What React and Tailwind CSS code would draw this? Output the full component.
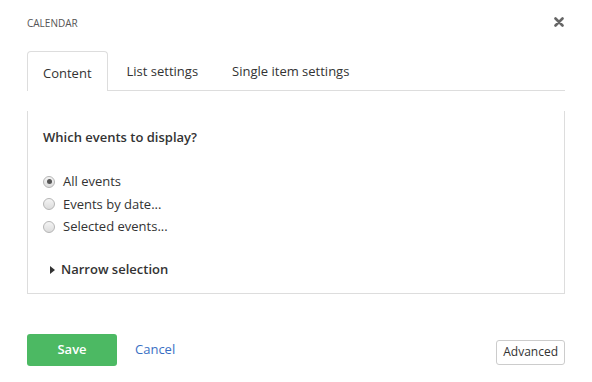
import { useState } from "react";

const Radio = ({ checked, label, onClick }) => (
  <label onClick={onClick} className="flex items-center gap-[8px] h-[22.5px] cursor-pointer">
    <span className="w-[12px] h-[12px] rounded-full border border-[#b5b5b5] bg-gradient-to-b from-[#f4f4f4] to-[#dcdcdc] flex items-center justify-center">
      {checked && <span className="w-[5px] h-[5px] rounded-full bg-[#555]" />}
    </span>
    <span className="text-[13px] text-[#333]">{label}</span>
  </label>
);

export default function App() {
  const [choice, setChoice] = useState(0);
  const tabs = ["Content", "List settings", "Single item settings"];

  return (
    <div className="w-[592px] h-[382px] bg-white font-['Open_Sans',sans-serif] text-[#333] px-[27px]">
      {/* Header */}
      <div className="flex items-center justify-between h-[46px] pt-[1px]">
        <span className="text-[10px] text-[#555] tracking-[0px]">CALENDAR</span>
        <svg width="10" height="10" viewBox="0 0 10 10" className="mr-[1px] -mt-[4px]">
          <path d="M1.5 1.5 L8.5 8.5 M8.5 1.5 L1.5 8.5" stroke="#666" strokeWidth="2.6" strokeLinecap="round" />
        </svg>
      </div>

      {/* Tabs */}
      <div className="flex items-end h-[46px] border-b border-[#ddd] mt-[-1px]">
        {tabs.map((t, i) => (
          <div
            key={t}
            className={
              i === 0
                ? "h-[40px] px-[15px] pt-[4px] flex items-center border border-b-0 border-[#ddd] rounded-t-[4px] bg-white mb-[-1px] text-[13px]"
                : "h-[40px] pl-[19px] pr-[15px] pt-[4px] flex items-center text-[13px]"
            }
          >
            {t}
          </div>
        ))}
      </div>

      {/* Panel */}
      <div className="mt-[20px] h-[183px] border border-t-0 border-[#ddd] px-[15px] pt-[17px]">
        <div className="text-[13px] font-semibold text-[#333]">Which events to display?</div>
        <div className="mt-[23px]">
          {["All events", "Events by date...", "Selected events..."].map((l, i) => (
            <Radio key={l} label={l} checked={choice === i} onClick={() => setChoice(i)} />
          ))}
        </div>
        <div className="flex items-center gap-[6px] mt-[22px] ml-[7px]">
          <svg width="5" height="8" viewBox="0 0 5 8">
            <path d="M0 0 L5 4 L0 8 Z" fill="#333" />
          </svg>
          <span className="text-[13px] font-semibold">Narrow selection</span>
        </div>
      </div>

      {/* Footer */}
      <div className="flex items-center justify-between mt-[40px]">
        <div className="flex items-center">
          <button className="w-[90px] h-[32px] bg-[#4cb963] text-white text-[13px] font-semibold rounded-[3px]">
            Save
          </button>
          <span className="ml-[18px] text-[13px] text-[#3a6fc4]">Cancel</span>
        </div>
        <button className="h-[25px] px-[6px] mt-[4px] border border-[#ccc] rounded-[3px] text-[12px] text-[#333] bg-white">
          Advanced
        </button>
      </div>
    </div>
  );
}
